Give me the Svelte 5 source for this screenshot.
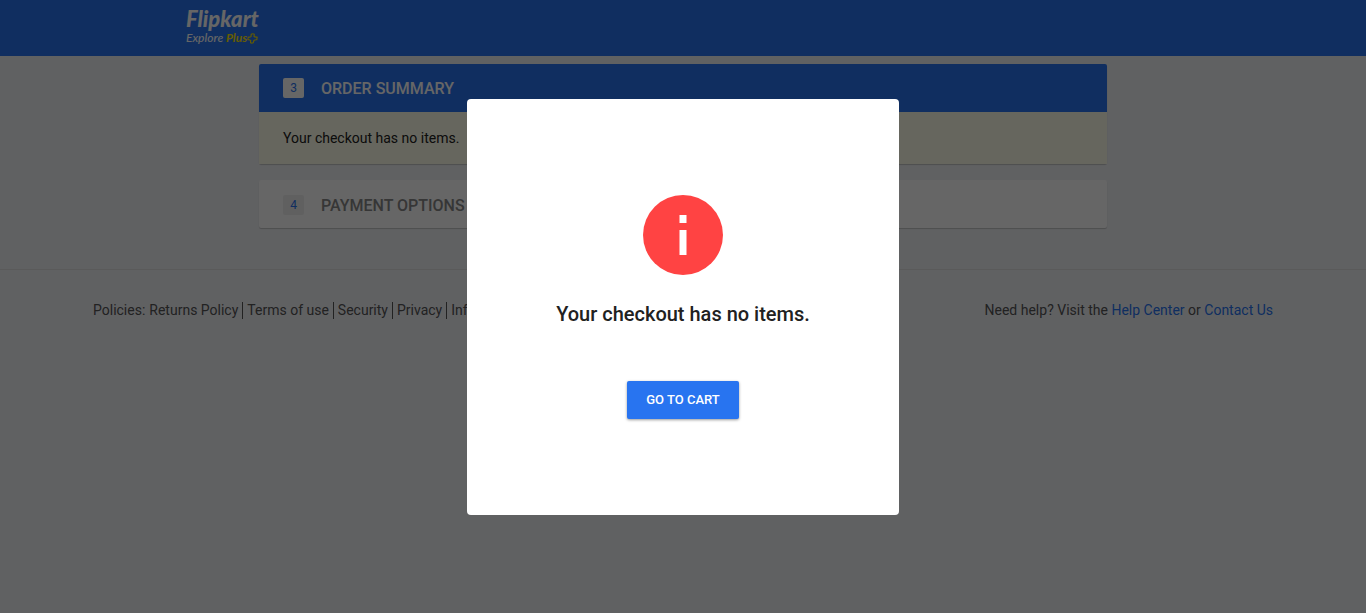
<script>
  const steps = [
    { number: 3, title: 'Order Summary', active: true, message: 'Your checkout has no items.' },
    { number: 4, title: 'Payment Options', active: false, message: '' }
  ];
  const policies = ['Returns Policy', 'Terms of use', 'Security', 'Privacy', 'Infringement'];
</script>

<div class="page">
  <header>
    <a class="logo" href="#home">
      <span class="brand">Flipkart</span>
      <span class="tagline">
        <span>Explore <b>Plus</b></span>
        <svg width="11" height="11" viewBox="0 0 11 11" aria-hidden="true">
          <path
            d="M4.200 1.200Q5.800.4 7.300 1.200L7 3.600Q8.300 4.300 10.200 4L9.800 6.800Q8 6.600 6.900 7.500L6.200 9.800Q4.800 10.400 3.500 9.800L3.700 7.500Q2.700 6.600.8 6.800L1.200 4Q3 4.300 4 3.600Z"
            fill="none" stroke="#ffe500" stroke-width="1.100" stroke-linejoin="round"
          />
        </svg>
      </span>
    </a>
  </header>

  <main>
    {#each steps as step}
      <section class="card" class:active={step.active}>
        <h3><span class="number">{step.number}</span><span>{step.title}</span></h3>
        {#if step.message}<p>{step.message}</p>{/if}
      </section>
    {/each}
  </main>

  <footer>
    <div class="links">
      <div class="policies">
        <span class="label">Policies:</span>
        {#each policies as policy}<a href="#policy">{policy}</a>{/each}
      </div>
      <div>Need help? Visit the <a class="help" href="#help">Help Center</a> or <a class="help" href="#contact">Contact Us</a></div>
    </div>
  </footer>
</div>

<div class="overlay">
  <div class="modal" role="dialog" aria-modal="true" aria-labelledby="modal-title">
    <svg width="80" height="80" viewBox="0 0 80 80" aria-hidden="true">
      <circle cx="40" cy="40" r="40" fill="#ff4343" />
      <path d="M36.500 20h7v8h-7zM36.500 35h7v25h-7z" fill="#fff" />
    </svg>
    <h2 id="modal-title">Your checkout has no items.</h2>
    <button type="button">GO TO CART</button>
  </div>
</div>

<style>
  :global(body) {
    margin: 0;
    background: #f1f3f6;
    font-family: Roboto, Arial, sans-serif;
    font-size: 14px;
    color: #212121;
  }
  a {
    color: inherit;
    text-decoration: none;
  }
  header {
    display: flex;
    align-items: center;
    box-sizing: border-box;
    height: 56px;
    padding: 0 0 4px 186px;
    background: #2874f0;
  }
  .logo {
    display: flex;
    flex-direction: column;
    color: #fff;
  }
  .brand {
    font: italic 900 22px/24px Lato, sans-serif;
  }
  .tagline {
    display: flex;
    align-items: center;
    font: italic 500 12px/14px Lato, sans-serif;
  }
  .tagline b {
    color: #ffe500;
  }
  main {
    display: flex;
    flex-direction: column;
    gap: 16px;
    max-width: 848px;
    margin: 8px auto 0;
  }
  .card {
    background: #fff;
    border-radius: 2px;
    box-shadow: 0 1px 1px 0 rgba(0, 0, 0, 0.2);
  }
  h3 {
    display: flex;
    align-items: center;
    gap: 17px;
    box-sizing: border-box;
    height: 48px;
    margin: 0;
    padding: 2px 24px 0;
    border-radius: 2px 2px 0 0;
    font-size: 16px;
    font-weight: 500;
    text-transform: uppercase;
    color: #878787;
  }
  .active h3 {
    padding-top: 0;
    background: #2874f0;
    color: #fff;
  }
  .number {
    width: 21px;
    border-radius: 2px;
    background: #f0f0f0;
    color: #2874f0;
    font-size: 12px;
    font-weight: 400;
    line-height: 20px;
    text-align: center;
  }
  .active .number {
    background: #fff;
  }
  p {
    margin: 0;
    padding: 16px 24px;
    background: #fffeea;
    line-height: 20px;
  }
  footer {
    margin-top: 41px;
    border-top: 1px solid #e0e0e0;
    color: #555;
  }
  .links {
    display: flex;
    justify-content: space-between;
    max-width: 1180px;
    margin: 32px auto;
    line-height: 17px;
  }
  .policies {
    display: flex;
  }
  .label {
    padding-right: 4px;
  }
  .policies a {
    padding-right: 4px;
    margin-right: 4px;
    border-right: 1px solid #555;
  }
  .policies a:last-child {
    border: 0;
  }
  .policies a,
  .label {
    white-space: nowrap;
  }
  .help {
    color: #2874f0;
  }
  .overlay {
    position: fixed;
    inset: 0;
    display: flex;
    align-items: center;
    justify-content: center;
    background: rgba(0, 0, 0, 0.6);
  }
  .modal {
    display: flex;
    flex-direction: column;
    align-items: center;
    box-sizing: border-box;
    width: 432px;
    padding: 96px 24px;
    border-radius: 4px;
    background: #fff;
  }
  h2 {
    margin: 24px 0 52px;
    font-size: 20px;
    font-weight: 500;
    line-height: 30px;
  }
  button {
    padding: 12px 19px;
    border: 0;
    border-radius: 2px;
    background: #2874f0;
    box-shadow: 0 1px 3px 0 rgba(0, 0, 0, 0.4);
    color: #fff;
    font: 500 13px/14px Roboto, Arial, sans-serif;
  }
</style>
